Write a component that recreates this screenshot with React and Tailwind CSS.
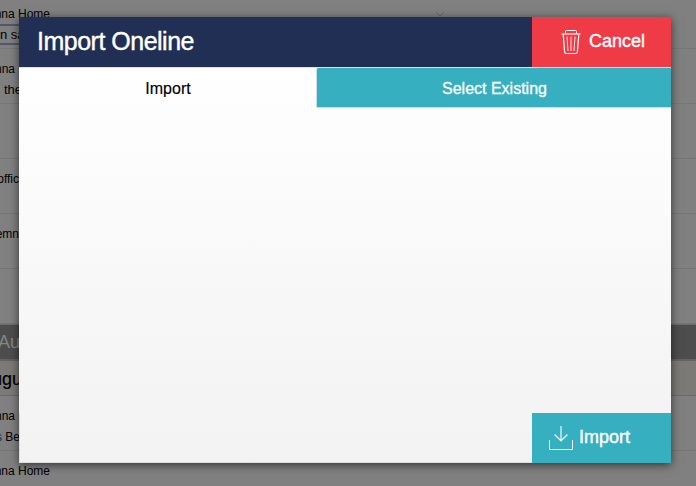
import React from 'react';

function Line({ text, width, className = '' }) {
  return (
    <div className={`flex h-[21px] items-center justify-end whitespace-nowrap text-[12px] text-black ${className}`} style={{ width }}>
      {text}
    </div>
  );
}

function Row({ children, className = '' }) {
  return <div className={`h-[55px] shrink-0 border-b border-[#767676] pt-[9px] ${className}`}>{children}</div>;
}

function TrashIcon() {
  return (
    <svg width="20" height="26" viewBox="0 0 20 26" fill="none" stroke="white" strokeWidth="1" className="shrink-0">
      <path d="M4.5 4.5V2.5Q4.5 1.5 5.5 1.5H14.5Q15.5 1.5 15.5 2.5V4.5" />
      <path d="M0.5 5H19.5" strokeWidth="1.4" opacity="0.8" />
      <path d="M2.2 5.5L3.6 22.8Q3.8 24.5 5.2 24.5H14.8Q16.2 24.5 16.4 22.8L17.8 5.5" strokeWidth="1.2" />
      <path d="M6 7.5L7 22M10 7.5V22M14 7.5L13 22" opacity="0.85" />
    </svg>
  );
}

function DownloadIcon() {
  return (
    <svg width="24" height="25" viewBox="0 0 24 25" fill="none" stroke="white" strokeWidth="1" className="shrink-0">
      <path d="M0.5 14V23.5H23.5V14" />
      <path d="M12 0V15M5.5 8.5L12 14.8L18.5 8.5" strokeWidth="1.3" opacity="0.85" />
    </svg>
  );
}

export default function App() {
  return (
    <div className="relative h-[486px] w-[696px] overflow-hidden bg-[#808080] font-['Liberation_Sans',Arial,sans-serif]">
      <div className="flex flex-col">
        <div className="h-[49px] shrink-0 border-b border-[#767676] pt-1">
          <div className="flex justify-between">
            <Line text="nna Home" width={50} className="h-5!" />
            <svg width="8" height="5" viewBox="0 0 8 5" fill="none" stroke="#626262" className="mt-[8px] mr-[252px]">
              <path d="M0.5 0.5L4 4L7.5 0.5" />
            </svg>
          </div>
          <div className="flex h-[21px] w-[120px] items-center border-2 border-l-0 border-[#51586c] text-[13px]">n safe</div>
        </div>
        <Row>
          <Line text="nna" width={15} />
          <Line text="the" width={22} className="text-[13px]!" />
        </Row>
        <Row />
        <Row><Line text="offic" width={19} /></Row>
        <Row><Line text="emn" width={19} /></Row>
        <Row />
        <div className="flex h-[37px] items-center border-t border-b-2 border-t-[#6c6c6c] border-b-[#656361] bg-[#4d4d4d] text-[18px] text-[#858585]">
          <span className="-ml-[2px]">August</span>
        </div>
        <div className="flex h-[35px] items-center border-b border-[#6b6a68] bg-[#7c7a77] pt-[2px] text-[18px] text-black [-webkit-text-stroke:0.2px]">
          <span className="-ml-[8px]">ugust</span>
        </div>
        <Row>
          <Line text="nna" width={15} />
          <Line text={<><span className="text-[#142c59]">s</span>&nbsp;Be</>} width={20} />
        </Row>
        <Row><Line text="nna Home" width={50} /></Row>
      </div>

      <div className="absolute top-[17px] left-[19px] flex h-[446px] w-[652px] flex-col bg-linear-to-b from-white from-10% to-[#f2f2f2] shadow-[0_2px_9px_rgba(0,0,0,0.6)]">
        <header className="flex h-[50px] shrink-0 bg-[#222f54] text-white">
          <h1 className="flex flex-1 items-center pb-px pl-[18px] text-[25px] tracking-[-0.5px] [-webkit-text-stroke:0.4px]">Import Oneline</h1>
          <button className="flex w-[139px] items-center gap-[8px] bg-[#ee3b46] pl-[29px] text-[18px] [-webkit-text-stroke:0.4px]">
            <TrashIcon />
            <span className="pb-[2px]">Cancel</span>
          </button>
        </header>
        <nav className="flex h-[41px] shrink-0 border-t border-[#dce1e8] text-[16px]">
          <button className="w-[297px] pt-px pl-px text-black [-webkit-text-stroke:0.15px]">Import</button>
          <button className="flex-1 rounded-tl-[2px] border-b border-l border-[#d4dce3] bg-[#36afc1] pt-[2px] pl-px text-white [-webkit-text-stroke:0.3px]">Select Existing</button>
        </nav>
        <main className="flex-1" />
        <footer className="flex h-[50px] shrink-0 justify-end">
          <div className="flex-1 rounded-bl-[2px] border-b border-l border-[#dddddd]" />
          <button className="flex w-[139px] items-center gap-[6px] bg-[#36afc1] pl-[17px] text-[18px] text-white [-webkit-text-stroke:0.4px]">
            <DownloadIcon />
            <span className="pb-[2px]">Import</span>
          </button>
        </footer>
      </div>
    </div>
  );
}
